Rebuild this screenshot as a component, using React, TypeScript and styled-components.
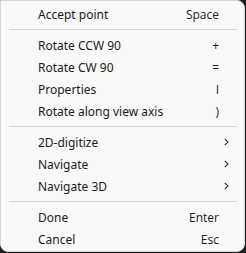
import React from "react";
import styled, { createGlobalStyle } from "styled-components";

const Global = createGlobalStyle`
  html, body { margin: 0; padding: 0; background: #1c1c1c; }
  body { width: 246px; height: 253px; overflow: hidden; }
`;

const Menu = styled.div`
  box-sizing: border-box;
  width: 245px;
  height: 252px;
  background: #f9f9f9;
  border: 1px solid #d6d6d6;
  border-radius: 0 8px 8px 8px;
  padding: 2px 0 0 0;
  font-family: "Segoe UI", "Noto Sans", "Open Sans", sans-serif;
  font-size: 12px;
  color: #1b1b1b;
  display: flex;
  flex-direction: column;
`;

const Row = styled.div`
  height: 22px;
  display: flex;
  align-items: center;
  padding: 0 25px 0 37px;
  position: relative;
`;

const Label = styled.span`
  flex: 1;
  white-space: nowrap;
`;

const Shortcut = styled.span`
  white-space: nowrap;
  font-family: "Open Sans", "Noto Sans", sans-serif;
`;

const Chevron = styled.svg`
  position: absolute;
  right: 15px;
  top: 7px;
  width: 5px;
  height: 8px;
`;

const Separator = styled.div`
  height: 1px;
  background: #d5d5d5;
  margin: 4px 7px 4px 8px;
`;

type Item = { label: string; key?: string; sub?: boolean } | "sep";

const items: Item[] = [
  { label: "Accept point", key: "Space" },
  "sep",
  { label: "Rotate CCW 90", key: "+" },
  { label: "Rotate CW 90", key: "=" },
  { label: "Properties", key: "I" },
  { label: "Rotate along view axis", key: ")" },
  "sep",
  { label: "2D-digitize", sub: true },
  { label: "Navigate", sub: true },
  { label: "Navigate 3D", sub: true },
  "sep",
  { label: "Done", key: "Enter" },
  { label: "Cancel", key: "Esc" },
];

export default function App() {
  return (
    <>
      <Global />
      <Menu>
        {items.map((it, i) =>
          it === "sep" ? (
            <Separator key={i} />
          ) : (
            <Row key={i}>
              <Label>{it.label}</Label>
              {it.key && <Shortcut>{it.key}</Shortcut>}
              {it.sub && (
                <Chevron viewBox="0 0 5 8">
                  <path d="M0.8 0.8 L4 4 L0.8 7.2" fill="none" stroke="#333" strokeWidth="1.1" />
                </Chevron>
              )}
            </Row>
          )
        )}
      </Menu>
    </>
  );
}
